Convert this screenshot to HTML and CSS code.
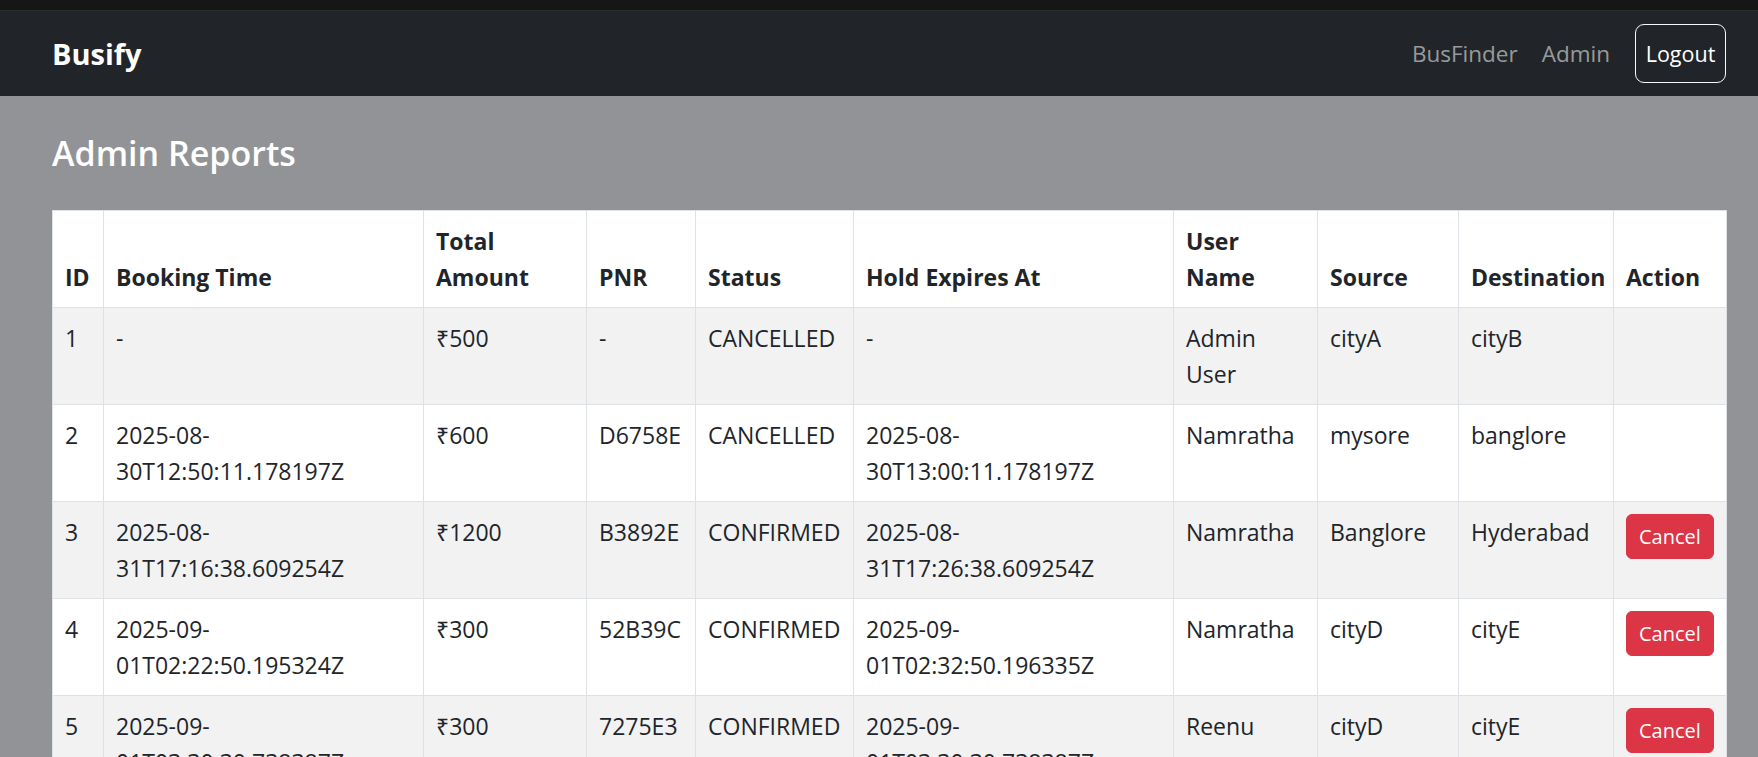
FILE: index.html
```html
<!DOCTYPE html>
<html lang="en">
<head>
<meta charset="utf-8">
<title>Busify - Admin Reports</title>
<link rel="stylesheet" href="styles.css">
</head>
<body>
<div class="topstrip"></div>
<nav class="navbar">
  <a class="brand" href="#">Busify</a>
  <div class="nav">
    <a class="nav-link" href="#">BusFinder</a>
    <a class="nav-link" href="#">Admin</a>
    <button class="btn-logout" type="button">Logout</button>
  </div>
</nav>
<main class="content">
  <h4 class="title">Admin Reports</h4>
  <table class="report">
    <thead>
      <tr>
        <th class="c-id">ID</th>
        <th class="c-time">Booking Time</th>
        <th class="c-amt">Total Amount</th>
        <th class="c-pnr">PNR</th>
        <th class="c-status">Status</th>
        <th class="c-hold">Hold Expires At</th>
        <th class="c-user">User Name</th>
        <th class="c-src">Source</th>
        <th class="c-dst">Destination</th>
        <th class="c-act">Action</th>
      </tr>
    </thead>
    <tbody>
      <tr>
        <td>1</td><td>-</td><td>₹500</td><td>-</td><td>CANCELLED</td><td>-</td><td>Admin User</td><td>cityA</td><td>cityB</td><td></td>
      </tr>
      <tr>
        <td>2</td><td>2025-08-30T12:50:11.178197Z</td><td>₹600</td><td>D6758E</td><td>CANCELLED</td><td>2025-08-30T13:00:11.178197Z</td><td>Namratha</td><td>mysore</td><td>banglore</td><td></td>
      </tr>
      <tr>
        <td>3</td><td>2025-08-31T17:16:38.609254Z</td><td>₹1200</td><td>B3892E</td><td>CONFIRMED</td><td>2025-08-31T17:26:38.609254Z</td><td>Namratha</td><td>Banglore</td><td>Hyderabad</td><td><button class="btn-cancel" type="button">Cancel</button></td>
      </tr>
      <tr>
        <td>4</td><td>2025-09-01T02:22:50.195324Z</td><td>₹300</td><td>52B39C</td><td>CONFIRMED</td><td>2025-09-01T02:32:50.196335Z</td><td>Namratha</td><td>cityD</td><td>cityE</td><td><button class="btn-cancel" type="button">Cancel</button></td>
      </tr>
      <tr>
        <td>5</td><td>2025-09-01T03:30:30.738387Z</td><td>₹300</td><td>7275E3</td><td>CONFIRMED</td><td>2025-09-01T03:30:30.738387Z</td><td>Reenu</td><td>cityD</td><td>cityE</td><td><button class="btn-cancel" type="button">Cancel</button></td>
      </tr>
    </tbody>
  </table>
</main>
</body>
</html>
```
FILE: styles.css
```css
* { box-sizing: border-box; }

html, body {
  margin: 0;
  padding: 0;
}

body {
  background: #929397;
  font-family: "Open Sans", "Noto Sans", sans-serif;
  font-size: 23px;
  line-height: 36px;
  color: #212529;
}

.topstrip {
  height: 11px;
  background: #161616;
  border-bottom: 1px solid #2a2c2e;
}

.navbar {
  height: 85px;
  background: #212529;
  display: flex;
  align-items: center;
  justify-content: space-between;
  padding: 0 32px 0 52px;
}

.brand {
  color: #ffffff;
  font-size: 29px;
  font-weight: 700;
  text-decoration: none;
  line-height: 45px;
}

.nav {
  display: flex;
  align-items: center;
}

.nav-link {
  color: rgba(255, 255, 255, 0.55);
  text-decoration: none;
  padding: 0 12px;
  font-size: 22.5px;
}

.btn-logout {
  margin-left: 13px;
  width: 91px;
  height: 59px;
  padding: 0;
  background: transparent;
  border: 1.5px solid #f8f9fa;
  border-radius: 9px;
  color: #ffffff;
  font-family: inherit;
  font-size: 21.5px;
  line-height: 36px;
  text-align: center;
}

.content {
  padding: 36px 32px 0 52px;
}

.title {
  margin: 0 0 35px;
  color: #ffffff;
  font-size: 34px;
  line-height: 43px;
  font-weight: 600;
}

.report {
  width: 1674px;
  border-collapse: collapse;
  table-layout: fixed;
  background: #ffffff;
}

.report th,
.report td {
  padding: 12px;
  border: 1px solid #dee2e6;
  text-align: left;
  vertical-align: top;
  line-height: 36px;
}

.report thead th {
  vertical-align: bottom;
  font-weight: 700;
}

.report tbody tr:nth-child(odd) td {
  background: #f2f2f2;
}

.c-id { width: 51px; }
.c-time { width: 320px; }
.c-amt { width: 163px; }
.c-pnr { width: 109px; }
.c-status { width: 158px; }
.c-hold { width: 320px; }
.c-user { width: 144px; }
.c-src { width: 141px; }
.c-dst { width: 155px; }
.c-act { width: 113px; }

.btn-cancel {
  display: block;
  padding: 6px 12px;
  background: #dc3545;
  border: 1.5px solid #dc3545;
  border-radius: 6px;
  color: #ffffff;
  font-family: inherit;
  font-size: 20px;
  line-height: 31px;
}
```
